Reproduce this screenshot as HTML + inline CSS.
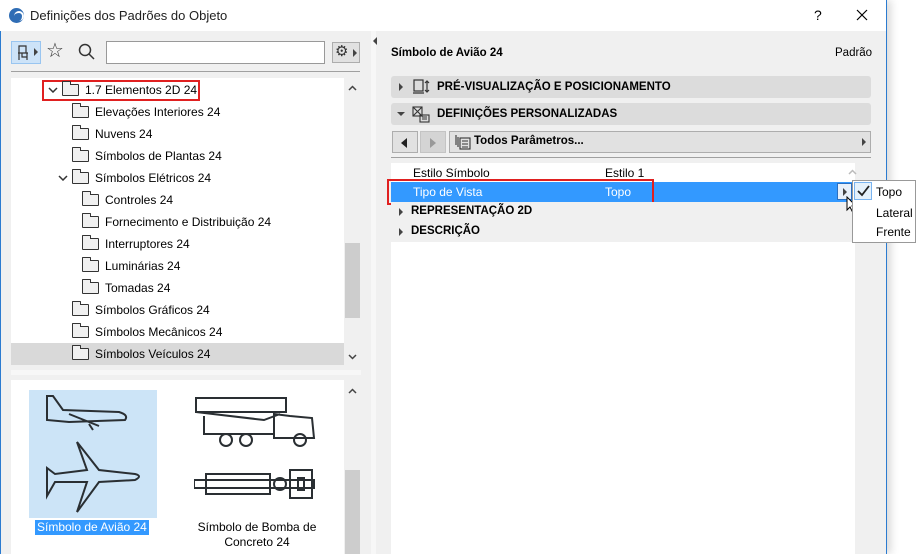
<!DOCTYPE html>
<html><head><meta charset="utf-8"><style>
*{margin:0;padding:0;box-sizing:border-box}
body{width:916px;height:554px;overflow:hidden;background:#fff;font-family:"Liberation Sans",sans-serif;font-size:12px;color:#000;position:relative}
.a{position:absolute}
.win{left:0;top:0;width:887px;height:554px;background:#f0f0f0;border-left:1px solid #2b7bd0;border-right:1px solid #2b7bd0;box-shadow:4px 0 8px rgba(0,0,0,0.15)}
.tb{left:0;top:0;width:886px;height:31px;background:#fff}
.row{position:absolute;height:22px;line-height:22px;white-space:nowrap}
.fold{display:inline-block;width:17px;height:12px;border:1px solid #333;border-radius:1px;background:#f0f0f0;vertical-align:middle;margin-right:6px;position:relative;top:-1px}
.fold:before{content:"";position:absolute;left:-1px;top:-4px;width:7px;height:3px;border:1px solid #333;border-bottom:none;border-radius:1px 1px 0 0;background:#f0f0f0}
.bar{position:absolute;left:391px;width:480px;height:22px;background:#dcdcdc;border-radius:3px;font-weight:bold;line-height:22px;font-size:11.5px}
.tri{position:absolute;width:0;height:0;border-top:4px solid transparent;border-bottom:4px solid transparent;border-left:4px solid #444}
</style></head><body>
<div class="a win"></div>
<div class="a tb"></div>
<div class="a" style="left:9px;top:8px;width:15px;height:15px;border-radius:50%;background:#2f6db5"></div>
<div class="a" style="left:14px;top:11px;width:10px;height:10px;border-radius:50%;border-top:2px solid #fff;border-right:2px solid #fff"></div>
<div class="a" style="left:30px;top:8px;font-size:13px;color:#222">Definições dos Padrões do Objeto</div>
<div class="a" style="left:814px;top:7px;font-size:14px">?</div>
<svg class="a" style="left:856px;top:9px" width="12" height="12"><path d="M1 1L11 11M11 1L1 11" stroke="#000" stroke-width="1.2"/></svg>

<!-- toolbar -->
<div class="a" style="left:11px;top:41px;width:30px;height:23px;background:#cde3f8;border:1px solid #99c5f0"></div>
<svg class="a" style="left:16px;top:45px" width="14" height="16" fill="none" stroke="#333" stroke-width="1.2"><path d="M3 1h7v7H3zM2 8h10M3 8v7M11 8v7M6 8v4h5"/></svg>
<div class="tri" style="left:34px;top:48px"></div>
<div class="a" style="left:46px;top:38px;font-size:20px;color:#333">☆</div>
<svg class="a" style="left:78px;top:43px" width="18" height="18"><circle cx="7" cy="7" r="5.5" fill="none" stroke="#333" stroke-width="1.5"/><line x1="11" y1="11" x2="16" y2="16" stroke="#333" stroke-width="1.5"/></svg>
<div class="a" style="left:106px;top:41px;width:219px;height:23px;background:#fff;border:1px solid #999"></div>
<div class="a" style="left:332px;top:42px;width:28px;height:21px;background:#e1e1e1;border:1px solid #adadad"></div>
<div class="a" style="left:335px;top:42px;font-size:15px;color:#333">⚙</div>
<div class="tri" style="left:353px;top:49px"></div>
<div class="a" style="left:11px;top:71px;width:349px;height:1px;background:#a0a0a0"></div>

<!-- tree -->
<div class="a" style="left:11px;top:78px;width:333px;height:287px;background:#fff"></div>
<div class="a" style="left:11px;top:343px;width:333px;height:22px;background:#d9d9d9"></div>
<div class="a" style="left:345px;top:243px;width:15px;height:75px;background:#cdcdcd"></div>
<svg class="a" style="left:348px;top:85px" width="9" height="6"><path d="M1 5L4.5 1.5L8 5" fill="none" stroke="#444" stroke-width="1.5"/></svg>
<svg class="a" style="left:348px;top:354px" width="9" height="6"><path d="M1 1L4.5 4.5L8 1" fill="none" stroke="#444" stroke-width="1.5"/></svg>
<div class="a" style="left:42px;top:80px;width:158px;height:21px;border:2px solid #e02020"></div>
<svg class="a" style="left:48px;top:87px" width="10" height="6"><path d="M1 1L5 5L9 1" fill="none" stroke="#333" stroke-width="1.5"/></svg>
<div class="row" style="left:62px;top:79px"><span class="fold"></span>1.7 Elementos 2D 24</div>
<div class="row" style="left:72px;top:101px"><span class="fold"></span>Elevações Interiores 24</div>
<div class="row" style="left:72px;top:123px"><span class="fold"></span>Nuvens 24</div>
<div class="row" style="left:72px;top:145px"><span class="fold"></span>Símbolos de Plantas 24</div>
<svg class="a" style="left:58px;top:175px" width="10" height="6"><path d="M1 1L5 5L9 1" fill="none" stroke="#333" stroke-width="1.5"/></svg>
<div class="row" style="left:72px;top:167px"><span class="fold"></span>Símbolos Elétricos 24</div>
<div class="row" style="left:82px;top:189px"><span class="fold"></span>Controles 24</div>
<div class="row" style="left:82px;top:211px"><span class="fold"></span>Fornecimento e Distribuição 24</div>
<div class="row" style="left:82px;top:233px"><span class="fold"></span>Interruptores 24</div>
<div class="row" style="left:82px;top:255px"><span class="fold"></span>Luminárias 24</div>
<div class="row" style="left:82px;top:277px"><span class="fold"></span>Tomadas 24</div>
<div class="row" style="left:72px;top:299px"><span class="fold"></span>Símbolos Gráficos 24</div>
<div class="row" style="left:72px;top:321px"><span class="fold"></span>Símbolos Mecânicos 24</div>
<div class="row" style="left:72px;top:343px"><span class="fold"></span>Símbolos Veículos 24</div>
<div class="a" style="left:11px;top:370px;width:350px;height:5px;background:#f7f7f7"></div>

<!-- preview -->
<div class="a" style="left:11px;top:380px;width:333px;height:174px;background:#fff"></div>
<div class="a" style="left:345px;top:470px;width:15px;height:84px;background:#cdcdcd"></div>
<svg class="a" style="left:348px;top:388px" width="9" height="6"><path d="M1 5L4.5 1.5L8 5" fill="none" stroke="#444" stroke-width="1.5"/></svg>
<div class="a" style="left:29px;top:390px;width:128px;height:128px;background:#cce4f7"></div>
<svg class="a" style="left:29px;top:390px" width="128" height="128" fill="none" stroke="#2a2f33" stroke-width="2">
<path d="M18 6 L24 6 L34 20 L90 22 Q100 25 96 30 L40 32 L18 30 Z"/><path d="M40 24 L70 36 M60 34 L64 40"/>
<path d="M48 52 L70 80 L106 84 Q114 86 106 90 L70 92 L48 122 L58 92 L26 92 L18 106 L18 78 L26 84 L58 80 Z"/>
</svg>
<svg class="a" style="left:194px;top:394px" width="124" height="120" fill="none" stroke="#2a2f33" stroke-width="2">
<rect x="2" y="4" width="90" height="14"/><path d="M2 18 L70 26 L86 20 M10 22 L10 40 L80 40 M80 20 L96 22 L118 24 L120 44 L80 44 Z"/>
<circle cx="32" cy="46" r="6"/><circle cx="52" cy="46" r="6"/><circle cx="106" cy="46" r="6"/>
<rect x="12" y="80" width="64" height="20"/><rect x="0" y="86" width="120" height="8"/><rect x="96" y="76" width="22" height="28"/><circle cx="86" cy="90" r="6"/><rect x="104" y="84" width="6" height="12"/>
</svg>
<div class="a" style="left:35px;top:520px;background:#3399ff;color:#fff;padding:0 2px;line-height:15px">Símbolo de Avião 24</div>
<div class="a" style="left:195px;top:520px;width:124px;text-align:center;line-height:15px">Símbolo de Bomba de Concreto 24</div>

<!-- divider -->
<div class="a" style="left:371px;top:31px;width:5px;height:523px;background:#f7f7f7"></div>
<div class="tri" style="left:373px;top:37px;border-left:none;border-right:4px solid #444"></div>

<!-- right -->
<div class="a" style="left:391px;top:47px;font-weight:bold;font-size:11.5px">Símbolo de Avião 24</div>
<div class="a" style="left:835px;top:47px;font-size:11.5px">Padrão</div>
<div class="bar" style="top:76px"><span class="tri" style="left:8px;top:7px"></span>
<svg style="position:absolute;left:21px;top:3px" width="18" height="17" fill="none" stroke="#333" stroke-width="1.2"><rect x="2" y="1" width="9" height="11"/><path d="M1 14h11M15 2v11M13 4l2-2 2 2M13 11l2 2 2-2"/></svg>
<span style="position:absolute;left:46px">PRÉ-VISUALIZAÇÃO E POSICIONAMENTO</span></div>
<div class="bar" style="top:103px"><span class="tri" style="left:6px;top:9px;border-left:4px solid transparent;border-right:4px solid transparent;border-top:4px solid #444;border-bottom:none"></span>
<svg style="position:absolute;left:21px;top:3px" width="18" height="17" fill="none" stroke="#333" stroke-width="1.1"><rect x="1" y="1" width="9" height="9"/><path d="M1 1l9 9M10 1l-9 9"/><rect x="8" y="9" width="9" height="7"/><path d="M10 11h5M10 13h5"/></svg>
<span style="position:absolute;left:46px">DEFINIÇÕES PERSONALIZADAS</span></div>
<div class="a" style="left:392px;top:131px;width:26px;height:22px;background:#e1e1e1;border:1px solid #adadad"></div>
<div class="tri" style="left:401px;top:138px;border-left:none;border-right:6px solid #222;border-top-width:5px;border-bottom-width:5px"></div>
<div class="a" style="left:420px;top:131px;width:26px;height:22px;background:#d4d4d4;border:1px solid #c4c4c4"></div>
<div class="tri" style="left:430px;top:138px;border-left:6px solid #999;border-top-width:5px;border-bottom-width:5px"></div>
<div class="a" style="left:449px;top:131px;width:422px;height:22px;background:#e1e1e1;border:1px solid #adadad"></div>
<svg class="a" style="left:455px;top:134px" width="16" height="16" fill="none" stroke="#333" stroke-width="1.1"><path d="M1 1v10M3 3v10"/><rect x="5" y="4" width="10" height="11"/><path d="M7 7h6M7 10h6M7 13h6"/></svg>
<div class="a" style="left:474px;top:135px;font-weight:bold;font-size:11.5px">Todos Parâmetros...</div>
<div class="tri" style="left:862px;top:138px"></div>
<div class="a" style="left:391px;top:157px;width:480px;height:1px;background:#a0a0a0"></div>
<div class="a" style="left:391px;top:163px;width:464px;height:391px;background:#fff"></div>
<svg class="a" style="left:848px;top:169px" width="9" height="6"><path d="M1 5L4.5 1.5L8 5" fill="none" stroke="#bbb" stroke-width="1.5"/></svg>
<div class="a" style="left:413px;top:166px">Estilo Símbolo</div>
<div class="a" style="left:605px;top:166px">Estilo 1</div>
<div class="a" style="left:391px;top:182px;width:464px;height:20px;background:#3399ff"></div>
<div class="a" style="left:387px;top:179px;width:267px;height:26px;border:2px solid #e02020"></div>
<div class="a" style="left:413px;top:185px;color:#fff">Tipo de Vista</div>
<div class="a" style="left:605px;top:185px;color:#fff">Topo</div>
<div class="a" style="left:837px;top:183px;width:15px;height:17px;background:#e8f0fa;border:1px solid #2b6fc0"></div>
<div class="tri" style="left:843px;top:188px"></div>
<div class="a" style="left:391px;top:202px;width:464px;height:40px;background:#f0f0f0"></div>
<div class="tri" style="left:399px;top:208px"></div>
<div class="a" style="left:411px;top:205px;font-weight:bold;font-size:11.5px">REPRESENTAÇÃO 2D</div>
<div class="tri" style="left:399px;top:228px"></div>
<div class="a" style="left:411px;top:225px;font-weight:bold;font-size:11.5px">DESCRIÇÃO</div>
<svg class="a" style="left:846px;top:196px" width="12" height="18"><path d="M1 1L1 14L4 11L7 17L9 16L6 10L10 10Z" fill="#fff" stroke="#000" stroke-width="1"/></svg>
<!-- popup -->
<div class="a" style="left:852px;top:180px;width:64px;height:63px;background:#fff;border:1px solid #999"></div>
<div class="a" style="left:854px;top:182px;width:18px;height:18px;border:1px solid #7ab4f0;background:#e5f1fb"></div>
<svg class="a" style="left:857px;top:185px" width="13" height="12"><path d="M1 6L5 10L12 1" fill="none" stroke="#222" stroke-width="1.8"/></svg>
<div class="a" style="left:876px;top:185px">Topo</div>
<div class="a" style="left:876px;top:206px">Lateral</div>
<div class="a" style="left:876px;top:225px">Frente</div>
</body></html>
